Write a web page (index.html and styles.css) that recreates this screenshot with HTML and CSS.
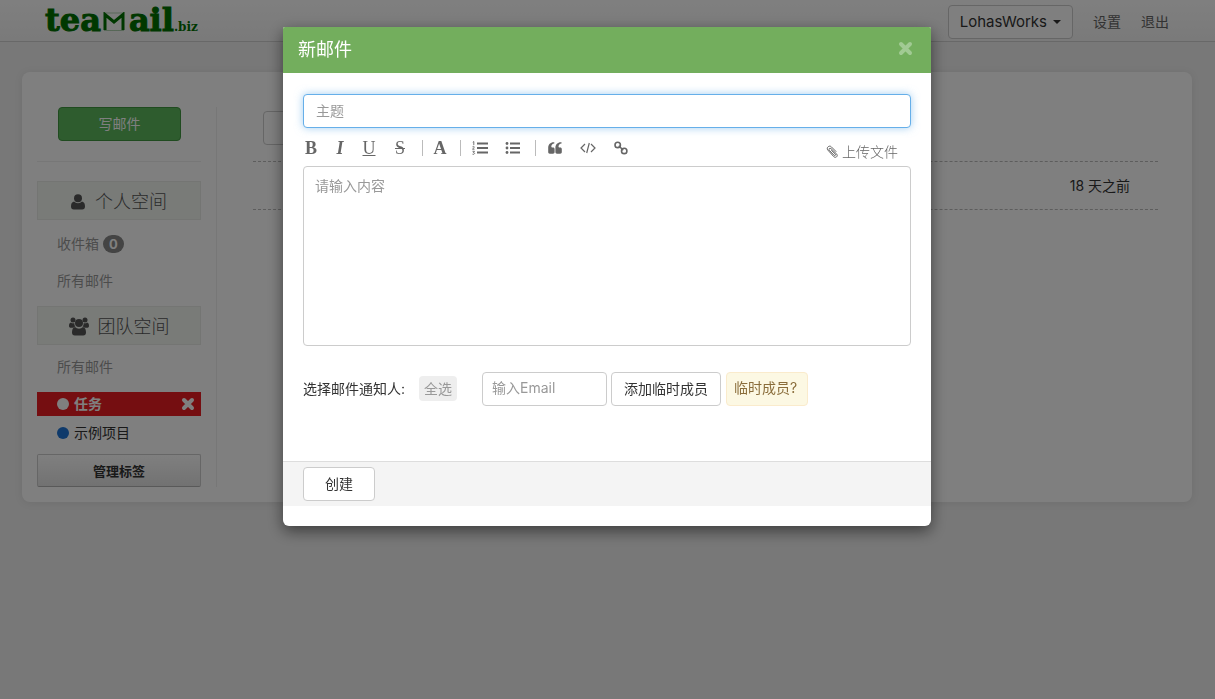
FILE: index.html
```
<!DOCTYPE html>
<html lang="zh-CN">
<head>
<meta charset="utf-8">
<title>teamail.biz</title>
<link rel="stylesheet" href="styles.css">
</head>
<body>
<header class="navbar">
  <a class="logo" href="#"><span>tea</span><svg class="logo-m" viewBox="0 0 22 19" aria-label="m"><path d="M2 18V2.500l9 7.500 9-7.500V18" fill="none" stroke="currentColor" stroke-width="3"/><path d="M1 1h20M1 18.500h20" stroke="currentColor" stroke-width=".3"/></svg><span>ail</span><span class="logo-tld">.biz</span></a>
  <nav class="nav-links">
    <button class="btn account" type="button">LohasWorks <span class="caret"></span></button>
    <a href="#">设置</a>
    <a href="#">退出</a>
  </nav>
</header>

<div class="card">
  <aside class="sidebar">
    <button class="compose" type="button">写邮件</button>
    <hr class="rule">
    <h2 class="space-title"><svg width="14" height="16" viewBox="0 0 14 16" fill="currentColor"><circle cx="7" cy="4.200" r="4"/><path d="M3 7.500a5.500 5.500 0 0 0 8 0c2.400.500 3 2.800 3 5 0 1.800-1 3-2.800 3H2.800C1 15.500 0 14.300 0 12.500c0-2.200.6-4.500 3-5z"/></svg>个人空间</h2>
    <a class="item" href="#">收件箱 <span class="badge">0</span></a>
    <a class="item" href="#">所有邮件</a>
    <h2 class="space-title team"><svg width="20" height="19" viewBox="0 0 20 19" fill="currentColor"><circle cx="4" cy="3" r="2.500"/><circle cx="16" cy="3" r="2.500"/><circle cx="10" cy="6" r="4"/><path d="M2 5.500c1 1 2.500 1 3.300.500 0 1.800.5 2.800 1.200 3.600-1 .1-1.800.5-2.300 1.200H2C.7 10.800 0 10.200 0 9c0-1.800.4-3.300 2-3.500zM18 5.500c-1 1-2.500 1-3.300.500 0 1.800-.5 2.800-1.200 3.600 1 .1 1.800.5 2.300 1.200H18c1.300 0 2-.6 2-1.800 0-1.800-.4-3.300-2-3.500zM6 10a5.500 5.500 0 0 0 8 0c2.400.5 3 3 3 5.500 0 1.800-1 3-2.800 3H5.800c-1.800 0-2.800-1.200-2.800-3C3 13 3.600 10.500 6 10z"/></svg>团队空间</h2>
    <a class="item" href="#">所有邮件</a>
    <div class="tag active"><a href="#"><span class="dot"></span>任务</a><button type="button" class="tag-remove" aria-label="移除"><svg width="14" height="14" viewBox="0 0 14 14"><path d="M3 3l8 8M11 3l-8 8" stroke="currentColor" stroke-width="4" stroke-linecap="round"/></svg></button></div>
    <div class="tag"><a href="#"><span class="dot blue"></span>示例项目</a></div>
    <button class="manage" type="button">管理标签</button>
  </aside>
  <main class="mails">
    <div class="mails-head"><input class="field search" type="text" aria-label="搜索"></div>
    <div class="mail-row"><time>18 天之前</time></div>
  </main>
</div>

<div class="overlay">
  <form class="modal" role="dialog" aria-labelledby="modal-title">
    <div class="modal-head">
      <h1 id="modal-title">新邮件</h1>
      <button class="close" type="button" aria-label="关闭"><svg width="15" height="15" viewBox="0 0 15 15"><path d="M3 3l9 9M12 3l-9 9" stroke="currentColor" stroke-width="4" stroke-linecap="round"/></svg></button>
    </div>
    <div class="modal-body">
      <input class="field subject" type="text" placeholder="主题" aria-label="主题">
      <div class="toolbar">
        <div class="group">
          <button type="button">B</button>
          <button type="button"><i>I</i></button>
          <button type="button" class="light"><u>U</u></button>
          <button type="button" class="wide light strike">S</button>
        </div>
        <div class="group split"><button type="button">A</button></div>
        <div class="group split">
          <button type="button" class="wide" aria-label="编号列表"><svg width="16" height="16" viewBox="0 0 16 16"><path d="M5 3.500h11M5 8h11M5 12.500h11" stroke="currentColor" stroke-width="2"/><path d="M.8 2.300l1-.800v3.500M.5 6.800c.5-.6 2-.5 1.800.4-.1.600-1.800 1.500-1.800 2h2M.5 11.300h2l-1.100 1.300c2 0 1.300 2.300-.9 1.600" fill="none" stroke="currentColor" stroke-width=".9"/></svg></button>
          <button type="button" class="wide" aria-label="项目列表"><svg width="16" height="16" viewBox="0 0 16 16"><path d="M5 3.500h10M5 8h10M5 12.500h10" stroke="currentColor" stroke-width="2"/><g fill="currentColor"><circle cx="2" cy="3.500" r="1.400"/><circle cx="2" cy="8" r="1.400"/><circle cx="2" cy="12.500" r="1.400"/></g></svg></button>
        </div>
        <div class="group split">
          <button type="button" class="wide" aria-label="引用"><svg width="14" height="14" viewBox="0 0 14 14" fill="currentColor"><path id="q" d="M6.300 1.300v1.300C4.500 2.800 3.300 4 3.300 5.600c0 .6.300.9.900.9h.8c1 0 1.600.7 1.600 1.700V11c0 1-.6 1.700-1.600 1.700H1.800C.8 12.700.2 12 .2 11V6.500C.2 3.600 2.500 1.300 5.500 1.300z"/><use href="#q" x="7.200"/></svg></button>
          <button type="button" class="wide" aria-label="代码"><svg width="16" height="14" viewBox="0 0 16 14"><path d="M5 3L1 7l4 4M11 3l4 4-4 4M9.300 2L6.700 12" fill="none" stroke="currentColor" stroke-width="1.200"/></svg></button>
          <button type="button" class="wide" aria-label="链接"><svg width="14" height="14" viewBox="0 0 14 14" fill="none" stroke="currentColor" stroke-width="1.600"><circle cx="3.700" cy="3.900" r="2.700"/><circle cx="10.200" cy="9.900" r="2.700"/><path d="M4.800 4.800l4.400 4.400"/></svg></button>
        </div>
        <button type="button" class="upload"><svg width="12" height="14" viewBox="0 0 12 14" fill="none" stroke="currentColor" stroke-linecap="round"><path d="M10 6.500L5.300 1.800C3.500 0 .2 2.200 1.600 4.800l6.200 6.900c1.600 1.700 4.600-.400 3-2.500L5 3.600C3.800 2.600 2.300 4 3.300 5.300l4.800 5c.9.700 1.900-.300 1.200-1.200L5.500 5.400"/></svg>上传文件</button>
      </div>
      <textarea class="field content" placeholder="请输入内容" aria-label="内容"></textarea>
      <div class="notify">
        <span class="notify-label">选择邮件通知人:</span>
        <button type="button" class="select-all">全选</button>
        <input class="field email" type="text" placeholder="输入Email" aria-label="Email">
        <button type="button" class="btn add">添加临时成员</button>
        <button type="button" class="hint">临时成员?</button>
      </div>
    </div>
    <div class="modal-foot"><button type="submit" class="btn create">创建</button></div>
  </form>
</div>
</body>
</html>
```
FILE: styles.css
```
* { box-sizing: border-box; }
body {
  margin: 0;
  min-height: 100vh;
  background: #f0f0f0;
  color: #333;
  font: 14px/20px Inter, "Noto Sans CJK SC", sans-serif;
}
button, input, textarea { font: inherit; color: inherit; margin: 0; }
button { background: none; border: 0; padding: 0; }
a { color: inherit; text-decoration: none; }
h1, h2 { margin: 0; font-weight: 400; }
svg { flex: none; }

.btn, .field { border: 1px solid #ccc; border-radius: 4px; background: #fff; height: 34px; }
.field::placeholder { color: #999; opacity: 1; }

.navbar {
  display: flex;
  justify-content: space-between;
  align-items: flex-start;
  height: 42px;
  padding: 5px 46px 0 45px;
  background: linear-gradient(#fff, #f4f4f4);
  border-bottom: 1px solid #d0d0d0;
}
.logo {
  display: flex;
  align-items: baseline;
  font: bold 32px/30px "DejaVu Serif", serif;
  color: #007000;
  -webkit-text-stroke: 1px #007000;
}
.logo-m { width: 22px; height: 19px; margin: 0 4px 0 2px; }
.logo-tld { font-size: 12px; -webkit-text-stroke: 0; }
.nav-links { display: flex; align-items: center; gap: 20px; color: #666; }
.account { display: flex; align-items: center; gap: 6px; padding: 0 11px; color: #333; font-size: 15px; }
.caret { border: 4px solid transparent; border-top-color: #333; border-bottom: 0; }

.card {
  display: flex;
  margin: 30px 23px 0 22px;
  padding: 35px 34px 15px 15px;
  background: #fff;
  border-radius: 8px;
  box-shadow: 0 1px 8px rgba(0, 0, 0, .08);
}
.sidebar {
  flex: none;
  display: flex;
  flex-direction: column;
  width: 180px;
  padding-right: 15px;
  border-right: 1px solid #eee;
}
.compose {
  height: 34px;
  margin: 0 20px 0 21px;
  background: #5cb85c;
  border: 1px solid #419641;
  border-radius: 4px;
  color: #fff;
}
.rule { width: 100%; margin: 20px 0 19px; border: 0; border-top: 1px solid #eee; }
.space-title {
  display: flex;
  align-items: center;
  justify-content: center;
  gap: 10px;
  height: 39px;
  padding-top: 2px;
  margin-bottom: 13px;
  background: #f2f6f1;
  border: 1px solid #e8ebe7;
  color: #555;
  font-size: 18px;
  font-weight: 300;
}
.team { gap: 9px; }
.item { display: flex; align-items: center; gap: 4px; height: 22px; margin: 0 0 15px 20px; color: #999; }
.item + .space-title { margin-top: -1px; margin-bottom: 11px; }
.item + .tag { margin-top: -1px; }
.badge { padding: 0 6px; background: #888; color: #fff; border-radius: 10px; font-size: 13px; line-height: 18px; font-weight: 700; }
.tag { display: flex; justify-content: space-between; align-items: center; height: 24px; padding: 0 6px 0 20px; margin-bottom: 5px; }
.tag a { display: flex; align-items: center; gap: 5px; }
.active { background: #ea1d22; color: #fff; font-weight: 700; }
.tag-remove { display: flex; }
.dot { width: 12px; height: 12px; border-radius: 50%; background: #fff; }
.blue { background: #1f75d6; }
.manage {
  height: 33px;
  margin-top: 4px;
  background: linear-gradient(#fff, #e4e4e4);
  border: 1px solid #ccc;
  border-bottom-color: #b3b3b3;
  border-radius: 2px;
  font-size: 13px;
  font-weight: 700;
}
.mails { flex: 1; padding-left: 36px; }
.mails-head { height: 55px; padding: 4px 10px 0; border-bottom: 1px dashed #bbb; }
.search { width: 220px; }
.mail-row { display: flex; justify-content: flex-end; padding: 14px 28px 13px; border-bottom: 1px dashed #bbb; }

.overlay {
  position: fixed;
  inset: 0;
  display: flex;
  justify-content: center;
  align-items: flex-start;
  padding: 27px 1px 0 0;
  background: rgba(0, 0, 0, .5);
}
.modal {
  width: 100%;
  max-width: 648px;
  padding-bottom: 20px;
  background: #fff;
  border-radius: 2px 2px 6px 6px;
  box-shadow: 0 5px 15px rgba(0, 0, 0, .5);
}
.modal-head {
  display: flex;
  align-items: center;
  justify-content: space-between;
  height: 46px;
  padding: 0 18px 0 15px;
  background: #73ae5d;
  border-radius: 2px 2px 0 0;
  color: #fff;
}
.modal-head h1 { font-size: 18px; line-height: 24px; }
.close { display: flex; padding-bottom: 3px; color: #a1ca93; }
.modal-body { padding: 21px 20px 55px; }
.subject { display: block; width: 100%; padding: 0 12px 2px; border-color: #66afe9; box-shadow: 0 0 8px rgba(102, 175, 233, .6); outline: 0; }
.toolbar { display: flex; align-items: center; gap: 12px; height: 38px; padding-top: 2px; color: #666; }
.group { display: flex; gap: 13px; }
.group button {
  display: flex;
  align-items: center;
  justify-content: center;
  width: 16px;
  height: 16px;
  font: bold 18px/16px "Liberation Serif", serif;
}
.group .wide { width: 20px; }
.group .light { font-weight: 400; }
.strike { text-decoration: line-through; }
.split { padding-left: 9px; border-left: 1px solid #bbb; }
.upload { display: flex; align-items: center; gap: 4px; margin: 8px 13px 0 auto; font-weight: 300; }
.content { display: block; width: 100%; height: 180px; padding: 9px 11px; resize: none; }
.notify { display: flex; align-items: center; margin-top: 25px; }
.select-all { height: 25px; margin: 0 25px 0 14px; padding: 0 5px; background: #eee; border-radius: 4px; color: #999; }
.email { width: 125px; padding: 0 9px 2px; }
.add { margin: 1px 5px 0 4px; padding: 0 12px; }
.hint { height: 34px; padding: 0 10px 2px 7px; background: #fcf8e3; border: 1px solid #faebcc; border-radius: 4px; color: #8a6d3b; }
.modal-foot { padding: 5px 20px; background: #f4f4f4; border-top: 1px solid #ddd; }
.create { width: 72px; }
```
